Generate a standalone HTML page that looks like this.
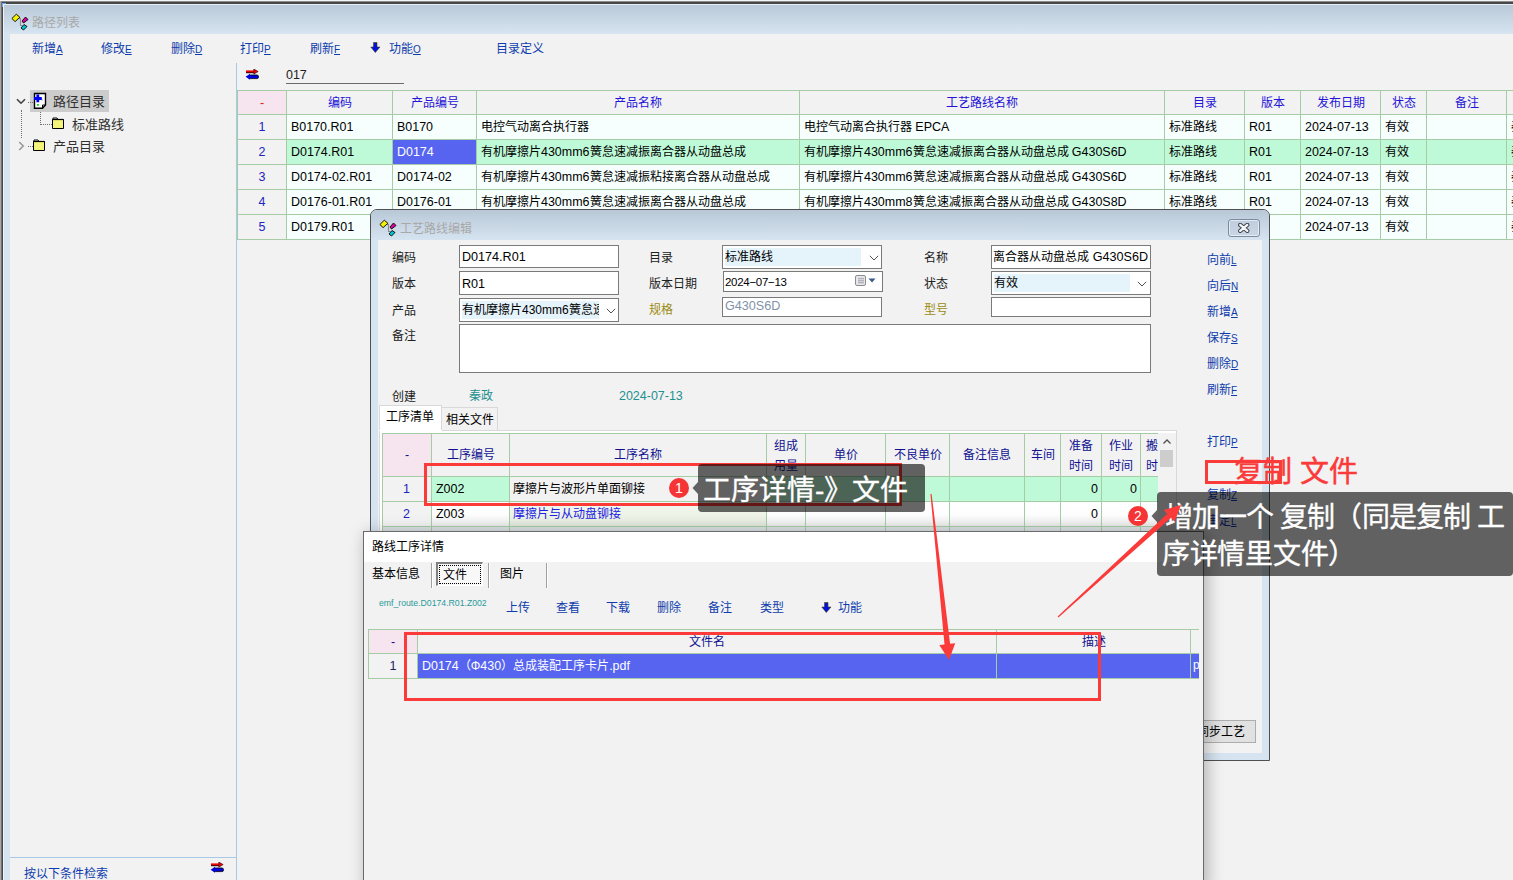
<!DOCTYPE html>
<html lang="zh-CN"><head><meta charset="utf-8"><title>路径列表</title>
<style>
html,body{margin:0;padding:0;}
body{width:1513px;height:880px;overflow:hidden;position:relative;background:#f2f2f2;font-family:'Liberation Sans',sans-serif;font-size:12px;}
div{box-sizing:border-box;}
u{text-decoration:underline;}
</style></head><body>
<div style="position:absolute;left:0px;top:0px;width:1513px;height:1px;background:#f5f5f5"></div>
<div style="position:absolute;left:0px;top:1px;width:1px;height:879px;background:#a8a8a8"></div>
<div style="position:absolute;left:1px;top:1px;width:1512px;height:1px;background:#8a8a8a"></div>
<div style="position:absolute;left:1px;top:2px;width:1px;height:878px;background:#707070"></div>
<div style="position:absolute;left:2px;top:2px;width:1511px;height:2px;background:#484848"></div>
<div style="position:absolute;left:2px;top:2px;width:1px;height:878px;background:#484848"></div>
<div style="position:absolute;left:3px;top:4px;width:1510px;height:30px;background:linear-gradient(#b9c8d7,#d7e5f2)"></div>
<div style="position:absolute;left:3px;top:4px;width:1510px;height:1px;background:#e6eef8"></div>
<div style="position:absolute;left:3px;top:4px;width:1px;height:876px;background:#eef4fc"></div>
<div style="position:absolute;left:4px;top:34px;width:6px;height:846px;background:#d6e4f1"></div>
<svg style="position:absolute;left:2px;top:3px" width="4" height="4" viewBox="0 0 4 4"><path d="M0 0 H4 V1 H1 V4 H0 Z" fill="#6aa8ff"/></svg>
<div style="position:absolute;left:10px;top:34px;width:1503px;height:846px;background:#f2f2f2"></div>
<svg style="position:absolute;left:11px;top:13px" width="18" height="18" viewBox="0 0 18 18">
<path d="M8 5.5 H10 M9.5 5.5 V12.5 H11.5" stroke="#8a8a8a" stroke-width="1.1" fill="none"/>
<path d="M5.3 1.2 L8.9 4.3 L4.1 8.6 L0.9 5.5 Z" fill="#f4f000" stroke="#000" stroke-width="0.9"/>
<path d="M14.5 4 L17 6.5 L12.5 10 L11 8 Z" fill="#e000a0" stroke="#000" stroke-width="0.9"/>
<path d="M13 11.5 L16 13.5 L12.5 17 L10 15 Z" fill="#00c8d0" stroke="#000" stroke-width="0.9"/>
</svg>
<div style="position:absolute;left:32px;top:16px;font-size:12px;line-height:14px;color:#a8a8a8;white-space:nowrap;">路径列表</div>
<div style="position:absolute;left:32px;top:42px;font-size:12px;line-height:14px;color:#0e3cac;white-space:nowrap">新增<span style="font-size:10px;text-decoration:underline">A</span></div>
<div style="position:absolute;left:101px;top:42px;font-size:12px;line-height:14px;color:#0e3cac;white-space:nowrap">修改<span style="font-size:10px;text-decoration:underline">E</span></div>
<div style="position:absolute;left:171px;top:42px;font-size:12px;line-height:14px;color:#0e3cac;white-space:nowrap">删除<span style="font-size:10px;text-decoration:underline">D</span></div>
<div style="position:absolute;left:240px;top:42px;font-size:12px;line-height:14px;color:#0e3cac;white-space:nowrap">打印<span style="font-size:10px;text-decoration:underline">P</span></div>
<div style="position:absolute;left:310px;top:42px;font-size:12px;line-height:14px;color:#0e3cac;white-space:nowrap">刷新<span style="font-size:10px;text-decoration:underline">F</span></div>
<svg style="position:absolute;left:370px;top:42px" width="11" height="11" viewBox="0 0 11 11">
<path d="M3.5 0.5 H7 V5 H10 L5.3 10.5 L0.8 5 H3.5 Z" fill="#0010e0" stroke="#504000" stroke-width="0.6"/>
</svg>
<div style="position:absolute;left:389px;top:42px;font-size:12px;line-height:14px;color:#0e3cac;white-space:nowrap">功能<span style="font-size:10px;text-decoration:underline">O</span></div>
<div style="position:absolute;left:496px;top:42px;font-size:12px;line-height:14px;color:#0e3cac;white-space:nowrap;">目录定义</div>
<div style="position:absolute;left:236px;top:63px;width:1px;height:817px;background:#a8c8e8"></div>
<div style="position:absolute;left:10px;top:857px;width:226px;height:1px;background:#a8c8e8"></div>
<div style="position:absolute;left:24px;top:866px;font-size:12px;line-height:16px;color:#0e3cac;white-space:nowrap;">按以下条件检索</div>
<svg style="position:absolute;left:210px;top:862px" width="14" height="11" viewBox="0 0 14 11">
<path d="M1 3.6 H9.5" stroke="#000" stroke-width="1.2"/>
<path d="M1 2.4 H9.5" stroke="#f00000" stroke-width="2"/><path d="M8.8 0 L13.2 2.6 L8.8 5.2 Z" fill="#f00000" stroke="#000" stroke-width="0.5"/>
<rect x="3.5" y="6" width="10" height="3.6" rx="1.6" fill="#0000e0" stroke="#000" stroke-width="0.8"/>
<path d="M5 4.8 L0.6 7.8 L5 10.8 Z" fill="#0000e0"/>
</svg>
<div style="position:absolute;left:30px;top:90px;width:79px;height:22px;background:#cccccc"></div>
<svg style="position:absolute;left:16px;top:98px" width="10" height="7" viewBox="0 0 10 7">
<path d="M1 1.2 L5 5.2 L9 1.2" stroke="#404040" stroke-width="1.6" fill="none"/></svg>
<svg style="position:absolute;left:33px;top:92px" width="14" height="17" viewBox="0 0 14 17">
<path d="M1.5 1.5 H12.5 V13 L9.5 16.2 H1.5 Z" fill="#fff" stroke="#000" stroke-width="1.4"/>
<path d="M9.5 16 V13 H12.5" fill="none" stroke="#000" stroke-width="1"/>
<path d="M8.5 6.5 Q10 7.5 8.5 9" stroke="#c8c8c8" stroke-width="1.2" fill="none"/>
<path d="M4.8 2.6 V10.2 M1 6.5 H8.8" stroke="#0000f0" stroke-width="2.8"/>
<rect x="4" y="12" width="1.8" height="1.8" fill="#00e000"/>
</svg>
<div style="position:absolute;left:53px;top:94px;font-size:13px;line-height:16px;color:#303030;white-space:nowrap;">路径目录</div>
<svg style="position:absolute;left:52px;top:117px" width="13" height="12" viewBox="0 0 13 12">
<path d="M0.5 2.5 H11.5 V11.5 H0.5 Z" fill="#f4f47a" stroke="#000" stroke-width="1"/>
<path d="M1 2.5 V1 H5 L6 2.5" fill="#fff" stroke="#000" stroke-width="1"/>
<path d="M0.5 2.5 H11.5" stroke="#000" stroke-width="1.2"/>
</svg>
<div style="position:absolute;left:72px;top:117px;font-size:13px;line-height:16px;color:#303030;white-space:nowrap;">标准路线</div>
<svg style="position:absolute;left:18px;top:141px" width="7" height="10" viewBox="0 0 7 10">
<path d="M1.2 1 L5.2 5 L1.2 9" stroke="#9a9a9a" stroke-width="1.6" fill="none"/></svg>
<svg style="position:absolute;left:33px;top:139px" width="13" height="12" viewBox="0 0 13 12">
<path d="M0.5 2.5 H11.5 V11.5 H0.5 Z" fill="#f4f47a" stroke="#000" stroke-width="1"/>
<path d="M1 2.5 V1 H5 L6 2.5" fill="#fff" stroke="#000" stroke-width="1"/>
<path d="M0.5 2.5 H11.5" stroke="#000" stroke-width="1.2"/>
</svg>
<div style="position:absolute;left:53px;top:139px;font-size:13px;line-height:16px;color:#303030;white-space:nowrap;">产品目录</div>
<div style="position:absolute;left:21px;top:110px;width:1px;height:28px;border-left:1px dotted #707070"></div>
<div style="position:absolute;left:28px;top:102px;width:5px;height:1px;border-top:1px dotted #707070"></div>
<div style="position:absolute;left:40px;top:112px;width:1px;height:13px;border-left:1px dotted #707070"></div>
<div style="position:absolute;left:40px;top:124px;width:12px;height:1px;border-top:1px dotted #707070"></div>
<div style="position:absolute;left:28px;top:146px;width:5px;height:1px;border-top:1px dotted #707070"></div>
<svg style="position:absolute;left:245px;top:69px" width="14" height="11" viewBox="0 0 14 11">
<path d="M1 3.6 H9.5" stroke="#000" stroke-width="1.2"/>
<path d="M1 2.4 H9.5" stroke="#f00000" stroke-width="2"/><path d="M8.8 0 L13.2 2.6 L8.8 5.2 Z" fill="#f00000" stroke="#000" stroke-width="0.5"/>
<rect x="3.5" y="6" width="10" height="3.6" rx="1.6" fill="#0000e0" stroke="#000" stroke-width="0.8"/>
<path d="M5 4.8 L0.6 7.8 L5 10.8 Z" fill="#0000e0"/>
</svg>
<div style="position:absolute;left:286px;top:67px;font-size:12px;line-height:16px;color:#202020;white-space:nowrap;"><span style="font-size:1.04em">017</span></div>
<div style="position:absolute;left:286px;top:83px;width:118px;height:1px;background:#6a6a6a"></div>
<div style="position:absolute;left:237px;top:90px;width:1276px;height:24px;background:#f2f2f2"></div>
<div style="position:absolute;left:237px;top:90px;width:49px;height:24px;background:#f6e4ee"></div>
<div style="position:absolute;left:237px;top:114px;width:49px;height:25px;background:#f2f2f2"></div>
<div style="position:absolute;left:286px;top:114px;width:1227px;height:25px;background:#f6fffd"></div>
<div style="position:absolute;left:237px;top:139px;width:49px;height:25px;background:#f2f2f2"></div>
<div style="position:absolute;left:286px;top:139px;width:1227px;height:25px;background:#bffad8"></div>
<div style="position:absolute;left:237px;top:164px;width:49px;height:25px;background:#f2f2f2"></div>
<div style="position:absolute;left:286px;top:164px;width:1227px;height:25px;background:#f6fffd"></div>
<div style="position:absolute;left:237px;top:189px;width:49px;height:25px;background:#f2f2f2"></div>
<div style="position:absolute;left:286px;top:189px;width:1227px;height:25px;background:#f6fffd"></div>
<div style="position:absolute;left:237px;top:214px;width:49px;height:25px;background:#f2f2f2"></div>
<div style="position:absolute;left:286px;top:214px;width:1227px;height:25px;background:#f6fffd"></div>
<div style="position:absolute;left:393px;top:140px;width:83px;height:24px;background:#5664f0"></div>
<div style="position:absolute;left:237px;top:90px;width:1276px;height:1px;background:#a6cca6"></div>
<div style="position:absolute;left:237px;top:114px;width:1276px;height:1px;background:#a6cca6"></div>
<div style="position:absolute;left:237px;top:139px;width:1276px;height:1px;background:#a6cca6"></div>
<div style="position:absolute;left:237px;top:164px;width:1276px;height:1px;background:#a6cca6"></div>
<div style="position:absolute;left:237px;top:189px;width:1276px;height:1px;background:#a6cca6"></div>
<div style="position:absolute;left:237px;top:214px;width:1276px;height:1px;background:#a6cca6"></div>
<div style="position:absolute;left:237px;top:239px;width:1276px;height:1px;background:#a6cca6"></div>
<div style="position:absolute;left:237px;top:90px;width:1px;height:150px;background:#a6cca6"></div>
<div style="position:absolute;left:286px;top:90px;width:1px;height:150px;background:#a6cca6"></div>
<div style="position:absolute;left:392px;top:90px;width:1px;height:150px;background:#a6cca6"></div>
<div style="position:absolute;left:476px;top:90px;width:1px;height:150px;background:#a6cca6"></div>
<div style="position:absolute;left:799px;top:90px;width:1px;height:150px;background:#a6cca6"></div>
<div style="position:absolute;left:1164px;top:90px;width:1px;height:150px;background:#a6cca6"></div>
<div style="position:absolute;left:1244px;top:90px;width:1px;height:150px;background:#a6cca6"></div>
<div style="position:absolute;left:1300px;top:90px;width:1px;height:150px;background:#a6cca6"></div>
<div style="position:absolute;left:1380px;top:90px;width:1px;height:150px;background:#a6cca6"></div>
<div style="position:absolute;left:1426px;top:90px;width:1px;height:150px;background:#a6cca6"></div>
<div style="position:absolute;left:1506px;top:90px;width:1px;height:150px;background:#a6cca6"></div>
<div style="position:absolute;left:238px;top:92px;width:48px;text-align:center;font-size:12px;line-height:23px;color:#e02020;white-space:nowrap;"><span style="font-size:1.04em">-</span></div>
<div style="position:absolute;left:287px;top:92px;width:105px;text-align:center;font-size:12px;line-height:23px;color:#2412d8;white-space:nowrap;">编码</div>
<div style="position:absolute;left:393px;top:92px;width:83px;text-align:center;font-size:12px;line-height:23px;color:#2412d8;white-space:nowrap;">产品编号</div>
<div style="position:absolute;left:477px;top:92px;width:322px;text-align:center;font-size:12px;line-height:23px;color:#2412d8;white-space:nowrap;">产品名称</div>
<div style="position:absolute;left:800px;top:92px;width:364px;text-align:center;font-size:12px;line-height:23px;color:#2412d8;white-space:nowrap;">工艺路线名称</div>
<div style="position:absolute;left:1165px;top:92px;width:79px;text-align:center;font-size:12px;line-height:23px;color:#2412d8;white-space:nowrap;">目录</div>
<div style="position:absolute;left:1245px;top:92px;width:55px;text-align:center;font-size:12px;line-height:23px;color:#2412d8;white-space:nowrap;">版本</div>
<div style="position:absolute;left:1301px;top:92px;width:79px;text-align:center;font-size:12px;line-height:23px;color:#2412d8;white-space:nowrap;">发布日期</div>
<div style="position:absolute;left:1381px;top:92px;width:45px;text-align:center;font-size:12px;line-height:23px;color:#2412d8;white-space:nowrap;">状态</div>
<div style="position:absolute;left:1427px;top:92px;width:79px;text-align:center;font-size:12px;line-height:23px;color:#2412d8;white-space:nowrap;">备注</div>
<div style="position:absolute;left:1507px;top:92px;width:93px;text-align:center;font-size:12px;line-height:23px;color:#2412d8;white-space:nowrap;">创建</div>
<div style="position:absolute;left:238px;top:115px;width:48px;text-align:center;font-size:12px;line-height:24px;color:#2222c0;white-space:nowrap;"><span style="font-size:1.04em">1</span></div>
<div style="position:absolute;left:291px;top:115px;width:100px;overflow:hidden;font-size:12px;line-height:24px;color:#000;white-space:nowrap"><span style="font-size:1.04em">B0170.R01</span></div>
<div style="position:absolute;left:397px;top:115px;width:78px;overflow:hidden;font-size:12px;line-height:24px;color:#000;white-space:nowrap"><span style="font-size:1.04em">B0170</span></div>
<div style="position:absolute;left:481px;top:115px;width:317px;overflow:hidden;font-size:12px;line-height:24px;color:#000;white-space:nowrap">电控气动离合执行器</div>
<div style="position:absolute;left:804px;top:115px;width:359px;overflow:hidden;font-size:12px;line-height:24px;color:#000;white-space:nowrap">电控气动离合执行器 <span style="font-size:1.04em">EPCA</span></div>
<div style="position:absolute;left:1169px;top:115px;width:74px;overflow:hidden;font-size:12px;line-height:24px;color:#000;white-space:nowrap">标准路线</div>
<div style="position:absolute;left:1249px;top:115px;width:50px;overflow:hidden;font-size:12px;line-height:24px;color:#000;white-space:nowrap"><span style="font-size:1.04em">R01</span></div>
<div style="position:absolute;left:1305px;top:115px;width:74px;overflow:hidden;font-size:12px;line-height:24px;color:#000;white-space:nowrap"><span style="font-size:1.04em">2024-07-13</span></div>
<div style="position:absolute;left:1385px;top:115px;width:40px;overflow:hidden;font-size:12px;line-height:24px;color:#000;white-space:nowrap">有效</div>
<div style="position:absolute;left:1511px;top:115px;width:88px;overflow:hidden;font-size:12px;line-height:24px;color:#000;white-space:nowrap">秦政</div>
<div style="position:absolute;left:238px;top:140px;width:48px;text-align:center;font-size:12px;line-height:24px;color:#2222c0;white-space:nowrap;"><span style="font-size:1.04em">2</span></div>
<div style="position:absolute;left:291px;top:140px;width:100px;overflow:hidden;font-size:12px;line-height:24px;color:#000;white-space:nowrap"><span style="font-size:1.04em">D0174.R01</span></div>
<div style="position:absolute;left:397px;top:140px;width:78px;overflow:hidden;font-size:12px;line-height:24px;color:#fff;white-space:nowrap"><span style="font-size:1.04em">D0174</span></div>
<div style="position:absolute;left:481px;top:140px;width:317px;overflow:hidden;font-size:12px;line-height:24px;color:#000;white-space:nowrap">有机摩擦片<span style="font-size:1.04em">430mm6</span>簧怠速减振离合器从动盘总成</div>
<div style="position:absolute;left:804px;top:140px;width:359px;overflow:hidden;font-size:12px;line-height:24px;color:#000;white-space:nowrap">有机摩擦片<span style="font-size:1.04em">430mm6</span>簧怠速减振离合器从动盘总成 <span style="font-size:1.04em">G430S6D</span></div>
<div style="position:absolute;left:1169px;top:140px;width:74px;overflow:hidden;font-size:12px;line-height:24px;color:#000;white-space:nowrap">标准路线</div>
<div style="position:absolute;left:1249px;top:140px;width:50px;overflow:hidden;font-size:12px;line-height:24px;color:#000;white-space:nowrap"><span style="font-size:1.04em">R01</span></div>
<div style="position:absolute;left:1305px;top:140px;width:74px;overflow:hidden;font-size:12px;line-height:24px;color:#000;white-space:nowrap"><span style="font-size:1.04em">2024-07-13</span></div>
<div style="position:absolute;left:1385px;top:140px;width:40px;overflow:hidden;font-size:12px;line-height:24px;color:#000;white-space:nowrap">有效</div>
<div style="position:absolute;left:1511px;top:140px;width:88px;overflow:hidden;font-size:12px;line-height:24px;color:#000;white-space:nowrap">秦政</div>
<div style="position:absolute;left:238px;top:165px;width:48px;text-align:center;font-size:12px;line-height:24px;color:#2222c0;white-space:nowrap;"><span style="font-size:1.04em">3</span></div>
<div style="position:absolute;left:291px;top:165px;width:100px;overflow:hidden;font-size:12px;line-height:24px;color:#000;white-space:nowrap"><span style="font-size:1.04em">D0174-02.R01</span></div>
<div style="position:absolute;left:397px;top:165px;width:78px;overflow:hidden;font-size:12px;line-height:24px;color:#000;white-space:nowrap"><span style="font-size:1.04em">D0174-02</span></div>
<div style="position:absolute;left:481px;top:165px;width:317px;overflow:hidden;font-size:12px;line-height:24px;color:#000;white-space:nowrap">有机摩擦片<span style="font-size:1.04em">430mm6</span>簧怠速减振粘接离合器从动盘总成</div>
<div style="position:absolute;left:804px;top:165px;width:359px;overflow:hidden;font-size:12px;line-height:24px;color:#000;white-space:nowrap">有机摩擦片<span style="font-size:1.04em">430mm6</span>簧怠速减振离合器从动盘总成 <span style="font-size:1.04em">G430S6D</span></div>
<div style="position:absolute;left:1169px;top:165px;width:74px;overflow:hidden;font-size:12px;line-height:24px;color:#000;white-space:nowrap">标准路线</div>
<div style="position:absolute;left:1249px;top:165px;width:50px;overflow:hidden;font-size:12px;line-height:24px;color:#000;white-space:nowrap"><span style="font-size:1.04em">R01</span></div>
<div style="position:absolute;left:1305px;top:165px;width:74px;overflow:hidden;font-size:12px;line-height:24px;color:#000;white-space:nowrap"><span style="font-size:1.04em">2024-07-13</span></div>
<div style="position:absolute;left:1385px;top:165px;width:40px;overflow:hidden;font-size:12px;line-height:24px;color:#000;white-space:nowrap">有效</div>
<div style="position:absolute;left:1511px;top:165px;width:88px;overflow:hidden;font-size:12px;line-height:24px;color:#000;white-space:nowrap">秦政</div>
<div style="position:absolute;left:238px;top:190px;width:48px;text-align:center;font-size:12px;line-height:24px;color:#2222c0;white-space:nowrap;"><span style="font-size:1.04em">4</span></div>
<div style="position:absolute;left:291px;top:190px;width:100px;overflow:hidden;font-size:12px;line-height:24px;color:#000;white-space:nowrap"><span style="font-size:1.04em">D0176-01.R01</span></div>
<div style="position:absolute;left:397px;top:190px;width:78px;overflow:hidden;font-size:12px;line-height:24px;color:#000;white-space:nowrap"><span style="font-size:1.04em">D0176-01</span></div>
<div style="position:absolute;left:481px;top:190px;width:317px;overflow:hidden;font-size:12px;line-height:24px;color:#000;white-space:nowrap">有机摩擦片<span style="font-size:1.04em">430mm6</span>簧怠速减振离合器从动盘总成</div>
<div style="position:absolute;left:804px;top:190px;width:359px;overflow:hidden;font-size:12px;line-height:24px;color:#000;white-space:nowrap">有机摩擦片<span style="font-size:1.04em">430mm8</span>簧怠速减振离合器从动盘总成 <span style="font-size:1.04em">G430S8D</span></div>
<div style="position:absolute;left:1169px;top:190px;width:74px;overflow:hidden;font-size:12px;line-height:24px;color:#000;white-space:nowrap">标准路线</div>
<div style="position:absolute;left:1249px;top:190px;width:50px;overflow:hidden;font-size:12px;line-height:24px;color:#000;white-space:nowrap"><span style="font-size:1.04em">R01</span></div>
<div style="position:absolute;left:1305px;top:190px;width:74px;overflow:hidden;font-size:12px;line-height:24px;color:#000;white-space:nowrap"><span style="font-size:1.04em">2024-07-13</span></div>
<div style="position:absolute;left:1385px;top:190px;width:40px;overflow:hidden;font-size:12px;line-height:24px;color:#000;white-space:nowrap">有效</div>
<div style="position:absolute;left:1511px;top:190px;width:88px;overflow:hidden;font-size:12px;line-height:24px;color:#000;white-space:nowrap">秦政</div>
<div style="position:absolute;left:238px;top:215px;width:48px;text-align:center;font-size:12px;line-height:24px;color:#2222c0;white-space:nowrap;"><span style="font-size:1.04em">5</span></div>
<div style="position:absolute;left:291px;top:215px;width:100px;overflow:hidden;font-size:12px;line-height:24px;color:#000;white-space:nowrap"><span style="font-size:1.04em">D0179.R01</span></div>
<div style="position:absolute;left:1305px;top:215px;width:74px;overflow:hidden;font-size:12px;line-height:24px;color:#000;white-space:nowrap"><span style="font-size:1.04em">2024-07-13</span></div>
<div style="position:absolute;left:1385px;top:215px;width:40px;overflow:hidden;font-size:12px;line-height:24px;color:#000;white-space:nowrap">有效</div>
<div style="position:absolute;left:1511px;top:215px;width:88px;overflow:hidden;font-size:12px;line-height:24px;color:#000;white-space:nowrap">秦政</div>
<div style="position:absolute;left:370px;top:209px;width:900px;height:552px;border:1px solid #505050;border-radius:7px 7px 0 0;background:#d6e4f1;overflow:hidden"><div style="position:absolute;left:0;top:0;width:100%;height:31px;background:linear-gradient(#b9c8d7,#d7e5f2)"></div></div>
<div style="position:absolute;left:378px;top:240px;width:884px;height:513px;background:#f2f2f2"></div>
<svg style="position:absolute;left:379px;top:219px" width="18" height="18" viewBox="0 0 18 18">
<path d="M8 5.5 H10 M9.5 5.5 V12.5 H11.5" stroke="#8a8a8a" stroke-width="1.1" fill="none"/>
<path d="M5.3 1.2 L8.9 4.3 L4.1 8.6 L0.9 5.5 Z" fill="#f4f000" stroke="#000" stroke-width="0.9"/>
<path d="M14.5 4 L17 6.5 L12.5 10 L11 8 Z" fill="#e000a0" stroke="#000" stroke-width="0.9"/>
<path d="M13 11.5 L16 13.5 L12.5 17 L10 15 Z" fill="#00c8d0" stroke="#000" stroke-width="0.9"/>
</svg>
<div style="position:absolute;left:400px;top:222px;font-size:12px;line-height:14px;color:#a8a8a8;white-space:nowrap;">工艺路线编辑</div>
<div style="position:absolute;left:1228px;top:219px;width:32px;height:18px;border:1px solid #7d8aa3;border-radius:3px;background:linear-gradient(#bfcddc,#c8d6e4);box-shadow:inset 0 0 0 1px rgba(255,255,255,0.55)">
<svg style="position:absolute;left:8px;top:3px" width="14" height="11" viewBox="0 0 14 11"><path d="M3.2 1.9 L10.3 7.9 M10.3 1.9 L3.2 7.9" stroke="#3c4450" stroke-width="4.2" stroke-linecap="round"/><path d="M3.2 1.9 L10.3 7.9 M10.3 1.9 L3.2 7.9" stroke="#f6f6f6" stroke-width="2.3" stroke-linecap="round"/></svg></div>
<div style="position:absolute;left:392px;top:251px;font-size:12px;line-height:14px;color:#202020;white-space:nowrap;">编码</div>
<div style="position:absolute;left:392px;top:277px;font-size:12px;line-height:14px;color:#202020;white-space:nowrap;">版本</div>
<div style="position:absolute;left:392px;top:304px;font-size:12px;line-height:14px;color:#202020;white-space:nowrap;">产品</div>
<div style="position:absolute;left:392px;top:329px;font-size:12px;line-height:14px;color:#202020;white-space:nowrap;">备注</div>
<div style="position:absolute;left:649px;top:251px;font-size:12px;line-height:14px;color:#202020;white-space:nowrap;">目录</div>
<div style="position:absolute;left:649px;top:277px;font-size:12px;line-height:14px;color:#202020;white-space:nowrap;">版本日期</div>
<div style="position:absolute;left:649px;top:303px;font-size:12px;line-height:14px;color:#9a8a10;white-space:nowrap;">规格</div>
<div style="position:absolute;left:924px;top:251px;font-size:12px;line-height:14px;color:#202020;white-space:nowrap;">名称</div>
<div style="position:absolute;left:924px;top:277px;font-size:12px;line-height:14px;color:#202020;white-space:nowrap;">状态</div>
<div style="position:absolute;left:924px;top:303px;font-size:12px;line-height:14px;color:#9a8a10;white-space:nowrap;">型号</div>
<div style="position:absolute;left:392px;top:390px;font-size:12px;line-height:14px;color:#202020;white-space:nowrap;">创建</div>
<div style="position:absolute;left:469px;top:389px;font-size:12px;line-height:14px;color:#1f9090;white-space:nowrap;">秦政</div>
<div style="position:absolute;left:619px;top:389px;font-size:12px;line-height:14px;color:#1f9090;white-space:nowrap;"><span style="font-size:1.04em">2024-07-13</span></div>
<div style="position:absolute;left:459px;top:245px;width:160px;height:23px;border:1px solid #7a7a7a;background:#fff;overflow:hidden"><div style="position:absolute;left:2px;top:4px;font-size:12.6px;line-height:14px">D0174.R01</div></div>
<div style="position:absolute;left:459px;top:271px;width:160px;height:24px;border:1px solid #7a7a7a;background:#fff;overflow:hidden"><div style="position:absolute;left:2px;top:5px;font-size:12.6px;line-height:14px">R01</div></div>
<div style="position:absolute;left:459px;top:298px;width:160px;height:24px;border:1px solid #7a7a7a;background:#fff;overflow:hidden"><div style="position:absolute;left:2px;top:2px;width:137px;height:18px;background:#e5f3fb"></div><div style="position:absolute;left:2px;top:4px;width:137px;overflow:hidden;white-space:nowrap;font-size:12px;line-height:14px">有机摩擦片430mm6簧怠速减振离合器从动盘总成</div></div>
<svg style="position:absolute;left:606px;top:308px" width="10" height="6" viewBox="0 0 10 6">
<path d="M0.8 0.8 L5 5 L9.2 0.8" stroke="#505050" stroke-width="1" fill="none"/></svg>
<div style="position:absolute;left:722px;top:245px;width:160px;height:24px;border:1px solid #7a7a7a;background:#fff;overflow:hidden"><div style="position:absolute;left:2px;top:2px;width:136px;height:18px;background:#e5f3fb"></div><div style="position:absolute;left:2px;top:4px;font-size:12px;line-height:14px">标准路线</div></div>
<svg style="position:absolute;left:869px;top:255px" width="10" height="6" viewBox="0 0 10 6">
<path d="M0.8 0.8 L5 5 L9.2 0.8" stroke="#505050" stroke-width="1" fill="none"/></svg>
<div style="position:absolute;left:723px;top:271px;width:160px;height:21px;border:1px solid #7a7a7a;background:#fff;overflow:hidden"><div style="position:absolute;left:1px;top:3px;font-size:11.5px;line-height:14px;letter-spacing:-0.3px">2024−07−13</div></div>
<svg style="position:absolute;left:855px;top:275px" width="24" height="12" viewBox="0 0 24 12">
<rect x="0.5" y="0.5" width="10" height="10" rx="1.5" fill="#e8e8ec" stroke="#8a8a90"/>
<path d="M3 3.5 H9 M3 5.5 H9 M3 7.5 H9 M4 2.5 V9 M6 2.5 V9 M8 2.5 V9" stroke="#a8a8b0" stroke-width="0.7"/>
<path d="M13.5 3.5 H20.5 L17 7.5 Z" fill="#3a5a8a"/></svg>
<div style="position:absolute;left:722px;top:297px;width:160px;height:20px;border:1px solid #7a7a7a;background:#fff;overflow:hidden"><div style="position:absolute;left:2px;top:1px;font-size:12.6px;line-height:14px;color:#7f93a8">G430S6D</div></div>
<div style="position:absolute;left:991px;top:245px;width:160px;height:24px;border:1px solid #7a7a7a;background:#fff;overflow:hidden"><div style="position:absolute;right:2px;top:4px;font-size:12px;line-height:14px">离合器从动盘总成 <span style="font-size:1.05em">G430S6D</span></div></div>
<div style="position:absolute;left:991px;top:271px;width:160px;height:24px;border:1px solid #7a7a7a;background:#fff;overflow:hidden"><div style="position:absolute;left:2px;top:2px;width:136px;height:18px;background:#e5f3fb"></div><div style="position:absolute;left:2px;top:4px;font-size:12px;line-height:14px">有效</div></div>
<svg style="position:absolute;left:1137px;top:281px" width="10" height="6" viewBox="0 0 10 6">
<path d="M0.8 0.8 L5 5 L9.2 0.8" stroke="#505050" stroke-width="1" fill="none"/></svg>
<div style="position:absolute;left:991px;top:297px;width:160px;height:20px;border:1px solid #7a7a7a;background:#fff;overflow:hidden"></div>
<div style="position:absolute;left:459px;top:324px;width:692px;height:49px;border:1px solid #7a7a7a;background:#fff;overflow:hidden"></div>
<div style="position:absolute;left:1207px;top:253px;font-size:12px;line-height:14px;color:#0e3cac;white-space:nowrap">向前<span style="font-size:10px;text-decoration:underline">L</span></div>
<div style="position:absolute;left:1207px;top:279px;font-size:12px;line-height:14px;color:#0e3cac;white-space:nowrap">向后<span style="font-size:10px;text-decoration:underline">N</span></div>
<div style="position:absolute;left:1207px;top:305px;font-size:12px;line-height:14px;color:#0e3cac;white-space:nowrap">新增<span style="font-size:10px;text-decoration:underline">A</span></div>
<div style="position:absolute;left:1207px;top:331px;font-size:12px;line-height:14px;color:#0e3cac;white-space:nowrap">保存<span style="font-size:10px;text-decoration:underline">S</span></div>
<div style="position:absolute;left:1207px;top:357px;font-size:12px;line-height:14px;color:#0e3cac;white-space:nowrap">删除<span style="font-size:10px;text-decoration:underline">D</span></div>
<div style="position:absolute;left:1207px;top:383px;font-size:12px;line-height:14px;color:#0e3cac;white-space:nowrap">刷新<span style="font-size:10px;text-decoration:underline">F</span></div>
<div style="position:absolute;left:1207px;top:435px;font-size:12px;line-height:14px;color:#0e3cac;white-space:nowrap">打印<span style="font-size:10px;text-decoration:underline">P</span></div>
<div style="position:absolute;left:1207px;top:488px;font-size:12px;line-height:14px;color:#0e3cac;white-space:nowrap">复制<span style="font-size:10px;text-decoration:underline">Z</span></div>
<div style="position:absolute;left:1207px;top:514px;font-size:12px;line-height:14px;color:#0e3cac;white-space:nowrap">审定<span style="font-size:10px;text-decoration:underline">L</span></div>
<div style="position:absolute;left:441px;top:407px;width:57px;height:24px;background:#f2f2f2;border:1px solid #d9d9d9;border-bottom:none"></div>
<div style="position:absolute;left:379px;top:405px;width:63px;height:26px;background:#fff;border:1px solid #d9d9d9;border-bottom:none"></div>
<div style="position:absolute;left:386px;top:410px;font-size:12px;line-height:14px;color:#000;white-space:nowrap;">工序清单</div>
<div style="position:absolute;left:446px;top:413px;font-size:12px;line-height:14px;color:#000;white-space:nowrap;">相关文件</div>
<div style="position:absolute;left:379px;top:430px;width:798px;height:101px;background:#fff;border:1px solid #d9d9d9;border-bottom:none"></div>
<div style="position:absolute;left:379px;top:430px;width:63px;height:1px;background:#fff"></div>
<div style="position:absolute;left:382px;top:433px;width:776px;height:43px;background:#f2f2f2"></div>
<div style="position:absolute;left:382px;top:433px;width:49px;height:43px;background:#f6e4ee"></div>
<div style="position:absolute;left:382px;top:476px;width:49px;height:55px;background:#f2f2f2"></div>
<div style="position:absolute;left:431px;top:476px;width:727px;height:25px;background:#bffad8"></div>
<div style="position:absolute;left:510px;top:477px;width:256px;height:24px;background:#f2f2f2"></div>
<div style="position:absolute;left:431px;top:501px;width:727px;height:25px;background:linear-gradient(#ffffff 0%,#fdfdfd 55%,#ebedeb 100%)"></div>
<div style="position:absolute;left:509px;top:501px;width:257px;height:25px;background:linear-gradient(#f2f6ee 0%,#eef3e8 60%,#e2e8dc 100%)"></div>
<div style="position:absolute;left:382px;top:526px;width:776px;height:5px;background:#dde3e6"></div>
<div style="position:absolute;left:382px;top:433px;width:776px;height:1px;background:#a6cca6"></div>
<div style="position:absolute;left:382px;top:476px;width:776px;height:1px;background:#a6cca6"></div>
<div style="position:absolute;left:382px;top:501px;width:776px;height:1px;background:#a6cca6"></div>
<div style="position:absolute;left:382px;top:526px;width:776px;height:1px;background:#a6cca6"></div>
<div style="position:absolute;left:382px;top:433px;width:1px;height:98px;background:#a6cca6"></div>
<div style="position:absolute;left:431px;top:433px;width:1px;height:98px;background:#a6cca6"></div>
<div style="position:absolute;left:509px;top:433px;width:1px;height:98px;background:#a6cca6"></div>
<div style="position:absolute;left:766px;top:433px;width:1px;height:98px;background:#a6cca6"></div>
<div style="position:absolute;left:805px;top:433px;width:1px;height:98px;background:#a6cca6"></div>
<div style="position:absolute;left:885px;top:433px;width:1px;height:98px;background:#a6cca6"></div>
<div style="position:absolute;left:949px;top:433px;width:1px;height:98px;background:#a6cca6"></div>
<div style="position:absolute;left:1024px;top:433px;width:1px;height:98px;background:#a6cca6"></div>
<div style="position:absolute;left:1060px;top:433px;width:1px;height:98px;background:#a6cca6"></div>
<div style="position:absolute;left:1101px;top:433px;width:1px;height:98px;background:#a6cca6"></div>
<div style="position:absolute;left:1140px;top:433px;width:1px;height:98px;background:#a6cca6"></div>
<div style="position:absolute;left:383px;top:448px;width:48px;text-align:center;font-size:12px;line-height:14px;color:#101090;white-space:nowrap;"><span style="font-size:1.04em">-</span></div>
<div style="position:absolute;left:432px;top:448px;width:77px;text-align:center;font-size:12px;line-height:14px;color:#101090;white-space:nowrap;">工序编号</div>
<div style="position:absolute;left:510px;top:448px;width:256px;text-align:center;font-size:12px;line-height:14px;color:#101090;white-space:nowrap;">工序名称</div>
<div style="position:absolute;left:767px;top:436px;width:38px;text-align:center;font-size:12px;line-height:20px;color:#101090;white-space:nowrap;">组成<br>用量</div>
<div style="position:absolute;left:806px;top:448px;width:79px;text-align:center;font-size:12px;line-height:14px;color:#101090;white-space:nowrap;">单价</div>
<div style="position:absolute;left:886px;top:448px;width:63px;text-align:center;font-size:12px;line-height:14px;color:#101090;white-space:nowrap;">不良单价</div>
<div style="position:absolute;left:950px;top:448px;width:74px;text-align:center;font-size:12px;line-height:14px;color:#101090;white-space:nowrap;">备注信息</div>
<div style="position:absolute;left:1025px;top:448px;width:35px;text-align:center;font-size:12px;line-height:14px;color:#101090;white-space:nowrap;">车间</div>
<div style="position:absolute;left:1061px;top:436px;width:40px;text-align:center;font-size:12px;line-height:20px;color:#101090;white-space:nowrap;">准备<br>时间</div>
<div style="position:absolute;left:1102px;top:436px;width:38px;text-align:center;font-size:12px;line-height:20px;color:#101090;white-space:nowrap;">作业<br>时间</div>
<div style="position:absolute;left:1141px;top:436px;width:17px;overflow:hidden;font-size:12px;line-height:20px;color:#101090;padding-left:5px;white-space:nowrap">搬<br>时</div>
<div style="position:absolute;left:382px;top:477px;width:49px;text-align:center;font-size:12px;line-height:24px;color:#2222c0;white-space:nowrap;"><span style="font-size:1.04em">1</span></div>
<div style="position:absolute;left:382px;top:502px;width:49px;text-align:center;font-size:12px;line-height:24px;color:#2222c0;white-space:nowrap;"><span style="font-size:1.04em">2</span></div>
<div style="position:absolute;left:436px;top:477px;font-size:12px;line-height:24px;color:#000;white-space:nowrap;"><span style="font-size:1.04em">Z002</span></div>
<div style="position:absolute;left:436px;top:502px;font-size:12px;line-height:24px;color:#000;white-space:nowrap;"><span style="font-size:1.04em">Z003</span></div>
<div style="position:absolute;left:513px;top:477px;font-size:12px;line-height:24px;color:#000;white-space:nowrap;">摩擦片与波形片单面铆接</div>
<div style="position:absolute;left:513px;top:502px;font-size:12px;line-height:24px;color:#2020e0;white-space:nowrap;">摩擦片与从动盘铆接</div>
<div style="position:absolute;left:1061px;top:477px;width:37px;text-align:right;font-size:12px;line-height:24px;color:#000;white-space:nowrap;"><span style="font-size:1.04em">0</span></div>
<div style="position:absolute;left:1102px;top:477px;width:35px;text-align:right;font-size:12px;line-height:24px;color:#000;white-space:nowrap;"><span style="font-size:1.04em">0</span></div>
<div style="position:absolute;left:1061px;top:502px;width:37px;text-align:right;font-size:12px;line-height:24px;color:#000;white-space:nowrap;"><span style="font-size:1.04em">0</span></div>
<div style="position:absolute;left:1158px;top:433px;width:18px;height:98px;background:#f2f2f2"></div>
<svg style="position:absolute;left:1162px;top:438px" width="10" height="7" viewBox="0 0 10 7"><path d="M1.5 5.5 L5 2 L8.5 5.5" stroke="#505050" stroke-width="1.3" fill="none"/></svg>
<div style="position:absolute;left:1160px;top:450px;width:13px;height:17px;background:#cdcdcd"></div>
<div style="position:absolute;left:1150px;top:720px;width:106px;height:23px;border:1px solid #adadad;background:#e1e1e1"><div style="position:absolute;right:10px;top:4px;font-size:12px;line-height:14px;color:#000">同步工艺</div></div>
<div style="position:absolute;left:363px;top:531px;width:841px;height:360px;border:1px solid #6a6a6a;background:#f2f2f2;box-shadow:3px 2px 16px rgba(0,0,0,0.28)"></div>
<div style="position:absolute;left:364px;top:532px;width:839px;height:30px;background:#fff"></div>
<div style="position:absolute;left:372px;top:540px;font-size:12px;line-height:14px;color:#000;white-space:nowrap;">路线工序详情</div>
<div style="position:absolute;left:431px;top:563px;width:1px;height:25px;background:#a0a0a0"></div>
<div style="position:absolute;left:432px;top:563px;width:1px;height:25px;background:#ffffff"></div>
<div style="position:absolute;left:488px;top:563px;width:1px;height:25px;background:#a0a0a0"></div>
<div style="position:absolute;left:489px;top:563px;width:1px;height:25px;background:#ffffff"></div>
<div style="position:absolute;left:546px;top:563px;width:1px;height:25px;background:#a0a0a0"></div>
<div style="position:absolute;left:547px;top:563px;width:1px;height:25px;background:#ffffff"></div>
<div style="position:absolute;left:372px;top:567px;font-size:12px;line-height:14px;color:#000;white-space:nowrap;">基本信息</div>
<div style="position:absolute;left:436px;top:562px;width:47px;height:24px;border-top:2px solid #808080;border-left:2px solid #808080;border-bottom:1px solid #fff;border-right:1px solid #fff;background:#f8f8f8"><div style="position:absolute;left:1px;top:1px;right:1px;bottom:1px;border:1px dotted #000"></div></div>
<div style="position:absolute;left:443px;top:568px;font-size:12px;line-height:14px;color:#000;white-space:nowrap;">文件</div>
<div style="position:absolute;left:500px;top:567px;font-size:12px;line-height:14px;color:#000;white-space:nowrap;">图片</div>
<div style="position:absolute;left:379px;top:598px;font-size:8.7px;line-height:11px;color:#2a9a9a;white-space:nowrap;">emf_route.D0174.R01.Z002</div>
<div style="position:absolute;left:506px;top:601px;font-size:12px;line-height:14px;color:#0e3cac;white-space:nowrap;">上传</div>
<div style="position:absolute;left:556px;top:601px;font-size:12px;line-height:14px;color:#0e3cac;white-space:nowrap;">查看</div>
<div style="position:absolute;left:606px;top:601px;font-size:12px;line-height:14px;color:#0e3cac;white-space:nowrap;">下载</div>
<div style="position:absolute;left:657px;top:601px;font-size:12px;line-height:14px;color:#0e3cac;white-space:nowrap;">删除</div>
<div style="position:absolute;left:708px;top:601px;font-size:12px;line-height:14px;color:#0e3cac;white-space:nowrap;">备注</div>
<div style="position:absolute;left:760px;top:601px;font-size:12px;line-height:14px;color:#0e3cac;white-space:nowrap;">类型</div>
<div style="position:absolute;left:838px;top:601px;font-size:12px;line-height:14px;color:#0e3cac;white-space:nowrap;">功能</div>
<svg style="position:absolute;left:821px;top:602px" width="11" height="11" viewBox="0 0 11 11">
<path d="M3.5 0.5 H7 V5 H10 L5.3 10.5 L0.8 5 H3.5 Z" fill="#0010e0" stroke="#504000" stroke-width="0.6"/>
</svg>
<div style="position:absolute;left:368px;top:629px;width:831px;height:24px;background:#f2f2f2"></div>
<div style="position:absolute;left:368px;top:629px;width:49px;height:24px;background:#f6e4ee"></div>
<div style="position:absolute;left:368px;top:653px;width:49px;height:25px;background:#f2f2f2"></div>
<div style="position:absolute;left:418px;top:654px;width:781px;height:24px;background:#5664f0"></div>
<div style="position:absolute;left:368px;top:629px;width:831px;height:1px;background:#a6cca6"></div>
<div style="position:absolute;left:368px;top:653px;width:831px;height:1px;background:#a6cca6"></div>
<div style="position:absolute;left:368px;top:678px;width:831px;height:1px;background:#a6cca6"></div>
<div style="position:absolute;left:368px;top:629px;width:1px;height:50px;background:#a6cca6"></div>
<div style="position:absolute;left:417px;top:629px;width:1px;height:50px;background:#a6cca6"></div>
<div style="position:absolute;left:996px;top:629px;width:1px;height:50px;background:#a6cca6"></div>
<div style="position:absolute;left:1190px;top:629px;width:1px;height:50px;background:#a6cca6"></div>
<div style="position:absolute;left:369px;top:635px;width:48px;text-align:center;font-size:12px;line-height:14px;color:#101090;white-space:nowrap;"><span style="font-size:1.04em">-</span></div>
<div style="position:absolute;left:418px;top:635px;width:578px;text-align:center;font-size:12px;line-height:14px;color:#101090;white-space:nowrap;">文件名</div>
<div style="position:absolute;left:997px;top:635px;width:193px;text-align:center;font-size:12px;line-height:14px;color:#101090;white-space:nowrap;">描述</div>
<div style="position:absolute;left:369px;top:659px;width:48px;text-align:center;font-size:12px;line-height:14px;color:#202060;white-space:nowrap;"><span style="font-size:1.04em">1</span></div>
<div style="position:absolute;left:422px;top:659px;font-size:12px;line-height:14px;color:#fff;white-space:nowrap;"><span style="font-size:1.04em">D0174</span>（Φ<span style="font-size:1.04em">430</span>）总成装配工序卡片<span style="font-size:1.04em">.pdf</span></div>
<div style="position:absolute;left:1191px;top:658px;width:8px;overflow:hidden;font-size:12px;line-height:14px;color:#fff;padding-left:2px">pdf</div>
<div style="position:absolute;left:424px;top:463px;width:478px;height:43px;border:3px solid #fb3a3a"></div>
<div style="position:absolute;left:404px;top:632px;width:697px;height:69px;border:3px solid #fb3a3a"></div>
<div style="position:absolute;left:1205px;top:460px;width:77px;height:24px;border:3px solid #fb3a3a"></div>
<div style="position:absolute;left:1234px;top:454px;font-size:29px;line-height:36px;color:#fb3a3a;white-space:nowrap;-webkit-text-stroke:0.45px #fb3a3a">复制 文件</div>
<div style="position:absolute;left:669px;top:478px;width:20px;height:20px;border-radius:50%;background:#f53535;color:#fff;font-size:14px;line-height:20px;text-align:center">1</div>
<div style="position:absolute;left:1128px;top:506px;width:20px;height:20px;border-radius:50%;background:#f53535;color:#fff;font-size:14px;line-height:20px;text-align:center">2</div>
<div style="position:absolute;left:698px;top:464px;width:227px;height:48px;border-radius:4px;background:rgba(0,0,0,0.6)"></div>
<svg style="position:absolute;left:692px;top:482px" width="6" height="12" viewBox="0 0 6 12"><path d="M6 0 L0.5 6 L6 12 Z" fill="rgba(0,0,0,0.6)"/></svg>
<div style="position:absolute;left:703px;top:472px;font-size:28px;line-height:38px;color:#fff;white-space:nowrap;-webkit-text-stroke:0.35px #fff">工序详情-》文件</div>
<div style="position:absolute;left:1157px;top:492px;width:356px;height:84px;border-radius:4px;background:rgba(0,0,0,0.6)"></div>
<svg style="position:absolute;left:1151px;top:510px" width="6" height="12" viewBox="0 0 6 12"><path d="M6 0 L0.5 6 L6 12 Z" fill="rgba(0,0,0,0.6)"/></svg>
<div style="position:absolute;left:1165px;top:499px;font-size:28px;line-height:38px;color:#fff;white-space:nowrap;letter-spacing:-0.9px;-webkit-text-stroke:0.35px #fff">增加一个 复制（同是复制 工</div>
<div style="position:absolute;left:1162px;top:536px;font-size:28px;line-height:38px;color:#fff;white-space:nowrap;letter-spacing:-0.3px;-webkit-text-stroke:0.35px #fff">序详情里文件）</div>
<svg style="position:absolute;left:0;top:0" width="1513" height="880"><path d="M930.4 494.1 L944.5 644.4 L939.3 645.0 L949.0 660.0 L955.2 643.2 L950.1 643.8 L931.6 493.9 Z" fill="#fb3a3a"/></svg>
<svg style="position:absolute;left:0;top:0" width="1513" height="880"><path d="M1058.4 617.4 L1171.1 517.8 L1174.6 521.7 L1181.0 505.0 L1163.8 509.9 L1167.3 513.7 L1057.6 616.6 Z" fill="#fb3a3a"/></svg>
</body></html>
